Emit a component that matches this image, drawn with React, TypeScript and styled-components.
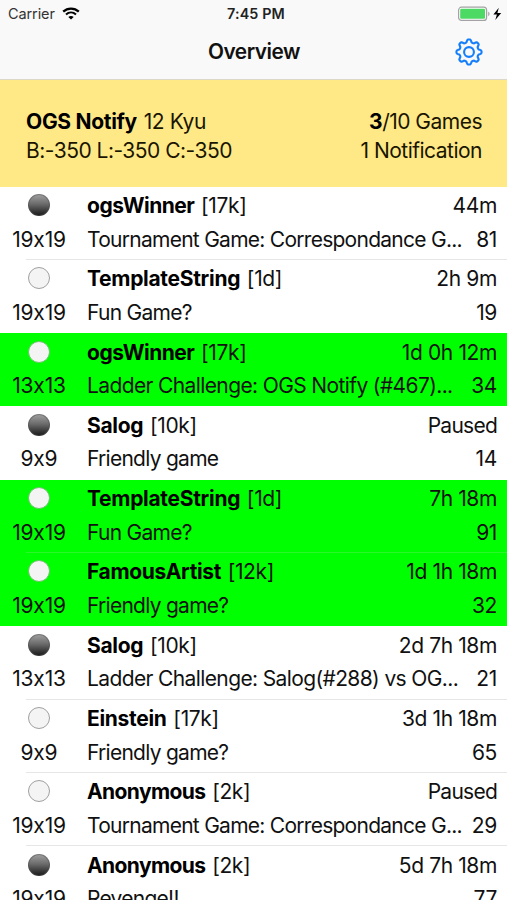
import React from "react";
import styled, { createGlobalStyle } from "styled-components";

const GlobalStyle = createGlobalStyle`
  * { box-sizing: border-box; }
  body {
    margin: 0;
    background: #fff;
    color: #111;
    font-family: Inter, "Liberation Sans", sans-serif;
    overflow: hidden;
  }
`;

const Screen = styled.main`
  display: flex;
  flex-direction: column;
  width: 507px;
  height: 900px;
  overflow: hidden;
  background: #fff;
`;

const Header = styled.header`
  flex: none;
  height: 80px;
  background: #f9f9f9;
  border-bottom: 1px solid #dcd8c8;
`;

const StatusBar = styled.div`
  display: grid;
  grid-template-columns: 1fr auto 1fr;
  align-items: center;
  height: 27px;
  padding: 0 5px 0 8px;
`;

const Carrier = styled.div`
  display: flex;
  align-items: center;
  gap: 7px;
  font-size: 14.5px;
  letter-spacing: -0.1px;
  color: #333;
`;

const Clock = styled.div`
  padding-left: 2px;
  font-size: 14.3px;
  font-weight: 600;
  letter-spacing: 0.15px;
  color: #222;
`;

const Power = styled.div`
  display: flex;
  align-items: center;
  justify-content: flex-end;
`;

const NavBar = styled.div`
  display: grid;
  grid-template-columns: 1fr auto 1fr;
  align-items: center;
  height: 50px;
  padding: 0 24px 0 25px;
`;

const Title = styled.h1`
  grid-column: 2;
  margin: 0;
  font-size: 20.8px;
  line-height: 26px;
  font-weight: 600;
  letter-spacing: -0.45px;
`;

const SettingsButton = styled.button`
  justify-self: end;
  display: flex;
  padding: 0;
  border: 0;
  background: none;
`;

const Summary = styled.section`
  flex: none;
  display: flex;
  justify-content: space-between;
  height: 106.5px;
  padding: 26.5px 25px 0 26px;
  background: #ffe987;
  font-size: 21px;
  line-height: 29.5px;
  color: #1a1500;
`;

const SummaryColumn = styled.div<{ $end?: boolean }>`
  text-align: ${(p) => (p.$end ? "right" : "left")};
`;

const Line = styled.div`
  letter-spacing: -0.51px;
  white-space: pre;
`;

const Strong = styled.b<{ $track?: number }>`
  font-weight: 700;
  color: #000;
  letter-spacing: ${(p) => p.$track ?? -0.3}px;
`;

const Rank = styled.span`
  margin-left: 1.2px;
  letter-spacing: -0.4px;
`;

const GameList = styled.ul`
  margin: 0;
  padding: 0;
  list-style: none;
`;

const GameRow = styled.li<{ $active: boolean; $divider: string }>`
  display: grid;
  grid-template-columns: 78px 1fr;
  column-gap: 9px;
  height: 73.3px;
  padding: 2.5px 10px 0 0;
  font-size: 21px;
  line-height: 33.5px;
  background-color: ${(p) => (p.$active ? "#00ff00" : "#fff")};
  background-image: linear-gradient(${(p) => p.$divider}, ${(p) => p.$divider});
  background-repeat: no-repeat;
  background-position: 26px 100%;
  background-size: 100% 1px;
`;

const Board = styled.div`
  display: flex;
  flex-direction: column;
  align-items: center;
  letter-spacing: -0.2px;
`;

const StoneCell = styled.div`
  height: 33.5px;
  padding-top: 5px;
`;

const Stone = styled.div<{ $black: boolean; $active: boolean }>`
  width: 22px;
  height: 22px;
  border-radius: 50%;
  border: 1px solid ${(p) => (p.$black ? "rgba(80, 80, 80, 0.5)" : p.$active ? "#6cc46c" : "#a0a0a0")};
  background: ${(p) => (p.$black ? "linear-gradient(#a2a2a2 0%, #6c6c6c 45%, #151515 100%) border-box" : "#f4f4f4")};
`;

const Details = styled.div`
  min-width: 0;
`;

const DetailLine = styled.div`
  display: flex;
  justify-content: space-between;
  white-space: pre;
`;

const Text = styled.span<{ $track?: number }>`
  letter-spacing: ${(p) => p.$track ?? -0.35}px;
`;

type Game = {
  player: string;
  playerTrack?: number;
  rank: string;
  time: string;
  size: string;
  name: string;
  nameTrack?: number;
  moves: number;
  black?: boolean;
  active?: boolean;
};

const games: Game[] = [
  { player: "ogsWinner", playerTrack: -0.5, rank: "17k", time: "44m", size: "19x19", name: "Tournament Game: Correspondance G...", moves: 81, black: true },
  { player: "TemplateString", rank: "1d", time: "2h 9m", size: "19x19", name: "Fun Game?", moves: 19 },
  { player: "ogsWinner", playerTrack: -0.5, rank: "17k", time: "1d 0h 12m", size: "13x13", name: "Ladder Challenge: OGS Notify (#467)...", nameTrack: -0.62, moves: 34, active: true },
  { player: "Salog", rank: "10k", time: "Paused", size: "9x9", name: "Friendly game", moves: 14, black: true },
  { player: "TemplateString", rank: "1d", time: "7h 18m", size: "19x19", name: "Fun Game?", moves: 91, active: true },
  { player: "FamousArtist", playerTrack: -0.38, rank: "12k", time: "1d 1h 18m", size: "19x19", name: "Friendly game?", moves: 32, active: true },
  { player: "Salog", rank: "10k", time: "2d 7h 18m", size: "13x13", name: "Ladder Challenge: Salog(#288) vs OG...", nameTrack: -0.62, moves: 21, black: true },
  { player: "Einstein", rank: "17k", time: "3d 1h 18m", size: "9x9", name: "Friendly game?", moves: 65 },
  { player: "Anonymous", playerTrack: -0.6, rank: "2k", time: "Paused", size: "19x19", name: "Tournament Game: Correspondance G...", moves: 29 },
  { player: "Anonymous", playerTrack: -0.6, rank: "2k", time: "5d 7h 18m", size: "19x19", name: "Revenge!!", moves: 77, black: true },
];

const dividerAfter = (i: number) => {
  const here = !!games[i].active;
  const next = !!games[i + 1]?.active;
  if (here !== next) return "transparent";
  return here ? "#2cf52c" : "#e6e6e6";
};

const WifiIcon = () => (
  <svg width="18" height="13" viewBox="0 0 18 13" fill="none" stroke="#000">
    <path d="M1.2 4.6C5.6.5 12.4.5 16.8 4.6" strokeWidth="2.3" />
    <path d="M4 7.5C6.9 4.9 11.1 4.9 14 7.5" strokeWidth="2.1" />
    <path d="M9 12.6 6.3 9.9C7.8 8.6 10.2 8.6 11.7 9.9Z" fill="#000" stroke="none" />
  </svg>
);

const BatteryIcon = () => (
  <svg width="45" height="16" viewBox="0 0 45 16">
    <rect x="1.6" y="1.2" width="28" height="13.2" rx="3" fill="#fff" stroke="#a2a2a2" strokeWidth="1.2" />
    <rect x="3.2" y="2.8" width="24.8" height="10" rx="1.2" fill="#4cd964" />
    <path d="M31.2 5.7c1.8.6 1.8 3.8 0 4.4Z" fill="#a2a2a2" />
    <path d="M41.8 1.8 36.4 8.6h3.5L38.3 14l5.9-7h-3.8Z" fill="#000" />
  </svg>
);

const gearPath = (() => {
  const pts: string[] = [];
  const n = 96;
  for (let i = 0; i < n; i++) {
    const a = (i / n) * Math.PI * 2;
    const wave = Math.tanh(1.8 * Math.cos(8 * a)) / Math.tanh(1.8);
    const r = 11.1 + 1.45 * wave;
    pts.push(`${(14 + r * Math.sin(a)).toFixed(2)} ${(14 - r * Math.cos(a)).toFixed(2)}`);
  }
  return `M${pts.join("L")}Z`;
})();

const GearIcon = () => (
  <svg width="28" height="28" viewBox="0 0 28 28" fill="none" stroke="#147efb" strokeWidth="2.1">
    <path d={gearPath} strokeLinejoin="round" />
    <circle cx="14" cy="14" r="4.9" />
  </svg>
);

export default function App() {
  return (
    <Screen>
      <GlobalStyle />
      <Header>
        <StatusBar>
          <Carrier>
            Carrier
            <WifiIcon />
          </Carrier>
          <Clock>7:45 PM</Clock>
          <Power>
            <BatteryIcon />
          </Power>
        </StatusBar>
        <NavBar>
          <Title>Overview</Title>
          <SettingsButton aria-label="Settings">
            <GearIcon />
          </SettingsButton>
        </NavBar>
      </Header>
      <Summary>
        <SummaryColumn>
          <Line><Strong>OGS Notify</Strong><Rank> 12 Kyu</Rank></Line>
          <Line>B:-350 L:-350 C:-350</Line>
        </SummaryColumn>
        <SummaryColumn $end>
          <Line><Strong>3</Strong>/10 Games</Line>
          <Line>1 Notification</Line>
        </SummaryColumn>
      </Summary>
      <GameList>
        {games.map((g, i) => (
          <GameRow key={i} $active={!!g.active} $divider={dividerAfter(i)}>
            <Board>
              <StoneCell>
                <Stone $black={!!g.black} $active={!!g.active} />
              </StoneCell>
              {g.size}
            </Board>
            <Details>
              <DetailLine>
                <Text><Strong $track={g.playerTrack}>{g.player}</Strong><Rank> [{g.rank}]</Rank></Text>
                <Text $track={g.time === "Paused" ? -0.75 : -0.38}>{g.time}</Text>
              </DetailLine>
              <DetailLine>
                <Text $track={g.nameTrack ?? -0.73}>{g.name}</Text>
                <Text>{g.moves}</Text>
              </DetailLine>
            </Details>
          </GameRow>
        ))}
      </GameList>
    </Screen>
  );
}
